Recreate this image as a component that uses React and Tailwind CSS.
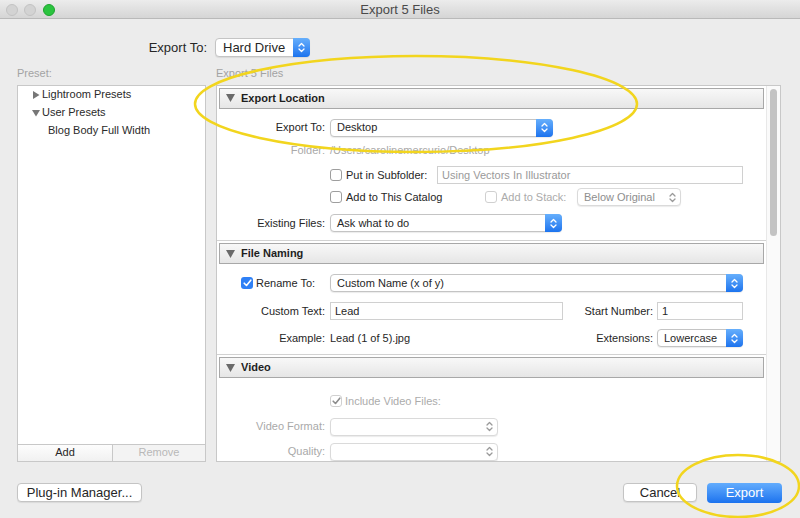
import React from "react";

const Chevrons = ({ color = "#fff" }) => (
  <svg width="7" height="11" viewBox="0 0 7 11" fill="none" stroke={color} strokeWidth="1.3" strokeLinecap="round" strokeLinejoin="round">
    <path d="M1 4L3.5 1.5L6 4" />
    <path d="M1 7L3.5 9.5L6 7" />
  </svg>
);

const Tick = ({ color }) => (
  <svg width="9" height="8" viewBox="0 0 9 8" fill="none" stroke={color} strokeWidth="1.6" strokeLinecap="round" strokeLinejoin="round">
    <path d="M1.2 4.2L3.5 6.5L7.8 1.2" />
  </svg>
);

function Popup({ className = "", text, muted, big }) {
  return (
    <div
      className={`flex items-stretch rounded-[4px] border bg-white shadow-[0_1px_1px_rgba(0,0,0,0.08)] ${
        big ? "h-[19px] text-[13px]" : "h-[18px]"
      } ${muted ? "border-[#dadada]" : "border-[#c4c4c4]"} ${className}`}
    >
      <span className={`flex flex-1 items-center truncate ${big ? "pl-[7px]" : "pl-[6px]"} ${muted ? "text-[#8e8e8e]" : ""}`}>
        {text}
      </span>
      {muted ? (
        <span className="flex w-[16px] items-center justify-center">
          <Chevrons color="#9a9a9a" />
        </span>
      ) : (
        <span className="-my-px -mr-px flex w-[17px] items-center justify-center rounded-r-[4px] bg-gradient-to-b from-[#66affc] to-[#1b73ee]">
          <Chevrons />
        </span>
      )}
    </div>
  );
}

function Field({ className = "", text, muted }) {
  return (
    <div className={`flex h-[18px] items-center border border-[#d0d0d0] bg-white pl-[4px] ${muted ? "text-[#9a9a9a]" : ""} ${className}`}>
      {text}
    </div>
  );
}

function Check({ on, dim }) {
  if (on && !dim) {
    return (
      <span className="flex h-[12px] w-[12px] shrink-0 items-center justify-center rounded-[3px] bg-[#2e80f6]">
        <Tick color="#fff" />
      </span>
    );
  }
  return (
    <span
      className={`flex h-[12px] w-[12px] shrink-0 items-center justify-center rounded-[3px] border bg-white ${
        dim ? "border-[#d0d0d0]" : "border-[#9e9e9e]"
      }`}
    >
      {on && <Tick color="#8c8c8c" />}
    </span>
  );
}

const Label = ({ children, dim }) => (
  <span className={`w-[113px] shrink-0 pr-[5px] text-right ${dim ? "text-[#a9a9a9]" : ""}`}>{children}</span>
);

function Header({ title }) {
  return (
    <div className="mx-[2px] mt-[2px] flex h-[21px] shrink-0 items-center border border-[#a8a8a8] bg-gradient-to-b from-[#f8f8f8] to-[#e6e6e6] pl-[6px]">
      <svg width="9" height="8" viewBox="0 0 9 8">
        <path d="M0 0H9L4.5 8Z" fill="#6a6a6a" />
      </svg>
      <span className="ml-[6px] font-bold text-[#1e1e1e]">{title}</span>
    </div>
  );
}

const Rule = ({ className = "" }) => <div className={`h-px shrink-0 bg-[#d2d2d2] ${className}`} />;

const Tri = ({ open }) => (
  <svg width="8" height="8" viewBox="0 0 8 8" className="shrink-0">
    {open ? <path d="M0 1H8L4 7.5Z" fill="#777" /> : <path d="M1 0V8L7.5 4Z" fill="#777" />}
  </svg>
);

export default function App() {
  return (
    <div className="relative h-[518px] w-[800px] overflow-hidden bg-[#ececec] font-['Liberation_Sans',Arial,sans-serif] text-[11px] text-[#262626]">
      {/* Title bar */}
      <div className="grid h-[19px] grid-cols-[1fr_auto_1fr] items-center border-b border-[#b9b9b9] bg-gradient-to-b from-[#ececec] to-[#d5d5d5]">
        <div className="flex items-center gap-[6px] pl-[6px]">
          <span className="h-[12px] w-[12px] rounded-full border border-[#c3c3c3] bg-[#d3d3d3]" />
          <span className="h-[12px] w-[12px] rounded-full border border-[#c3c3c3] bg-[#d3d3d3]" />
          <span className="ml-px h-[12px] w-[12px] rounded-full border border-[#1ea32f] bg-[#2bc43f]" />
        </div>
        <span className="text-[13px] text-[#4a4a4a]">Export 5 Files</span>
        <span />
      </div>

      {/* Export To */}
      <div className="mt-[19px] flex items-center text-[13px]">
        <span className="w-[208px] pr-[1px] text-right">Export To:</span>
        <Popup big className="ml-[7px] w-[95px]" text="Hard Drive" />
      </div>

      {/* Main */}
      <div className="mt-[10px] flex gap-[10px] pl-[17px]">
        {/* Presets */}
        <div className="flex w-[189px] flex-col">
          <span className="mb-[5px] flex h-[12px] items-center text-[#a3a3a3]">Preset:</span>
          <div className="flex h-[377px] flex-col border border-[#c8c8c8] bg-white">
            <div className="flex-1 text-[#2a2a2a]">
              <div className="flex h-[18px] items-center pl-[14px]">
                <Tri />
                <span className="ml-[2px]">Lightroom Presets</span>
              </div>
              <div className="flex h-[18px] items-center pl-[14px]">
                <Tri open />
                <span className="ml-[2px]">User Presets</span>
              </div>
              <div className="flex h-[18px] items-center pl-[30px]">Blog Body Full Width</div>
            </div>
            <div className="flex h-[17px] border-t border-[#c8c8c8]">
              <span className="flex w-[95px] items-center justify-center border-r border-[#c8c8c8] bg-gradient-to-b from-[#fdfdfd] to-[#f1f1f1]">
                Add
              </span>
              <span className="flex flex-1 items-center justify-center bg-[#f3f3f3] text-[#b8b8b8]">Remove</span>
            </div>
          </div>
        </div>

        {/* Settings */}
        <div className="flex w-[565px] flex-col">
          <span className="mb-[5px] flex h-[12px] items-center text-[#a3a3a3]">Export 5 Files</span>
          <div className="flex h-[377px] border border-[#c8c8c8] bg-white">
            <div className="flex flex-1 flex-col overflow-hidden">
              <Header title="Export Location" />
              <div className="mt-[10px] flex h-[18px] items-center">
                <Label>Export To:</Label>
                <Popup className="w-[223px]" text="Desktop" />
              </div>
              <div className="mt-[5px] flex h-[18px] items-center">
                <Label dim>Folder:</Label>
                <span className="text-[#a9a9a9]">/Users/carolinemercurio/Desktop</span>
              </div>
              <div className="mt-[8px] flex h-[18px] items-center pl-[113px]">
                <Check />
                <span className="ml-[4px] w-[91px]">Put in Subfolder:</span>
                <Field muted className="w-[306px]" text="Using Vectors In Illustrator" />
              </div>
              <div className="mt-[4px] flex h-[18px] items-center pl-[113px]">
                <Check />
                <span className="ml-[4px] w-[139px]">Add to This Catalog</span>
                <Check dim />
                <span className="ml-[4px] w-[76px] text-[#ababab]">Add to Stack:</span>
                <Popup muted className="w-[104px]" text="Below Original" />
              </div>
              <div className="mt-[8px] flex h-[18px] items-center">
                <Label>Existing Files:</Label>
                <Popup className="w-[232px]" text="Ask what to do" />
              </div>
              <Rule className="mt-[8px]" />

              <Header title="File Naming" />
              <div className="mt-[10px] flex h-[18px] items-center pl-[24px]">
                <Check on />
                <span className="ml-[3px] w-[74px]">Rename To:</span>
                <Popup className="w-[413px]" text="Custom Name (x of y)" />
              </div>
              <div className="mt-[10px] flex h-[18px] items-center">
                <Label>Custom Text:</Label>
                <Field className="w-[233px]" text="Lead" />
                <span className="w-[90px] text-right">Start Number:</span>
                <Field className="ml-[4px] w-[86px]" text="1" />
              </div>
              <div className="mt-[9px] flex h-[18px] items-center">
                <Label>Example:</Label>
                <span className="w-[233px]">Lead (1 of 5).jpg</span>
                <span className="w-[90px] text-right">Extensions:</span>
                <Popup className="ml-[4px] w-[86px]" text="Lowercase" />
              </div>
              <Rule className="mt-[7px]" />

              <Header title="Video" />
              <div className="mt-[15px] flex h-[18px] items-center pl-[113px]">
                <Check on dim />
                <span className="ml-[3px] text-[#ababab]">Include Video Files:</span>
              </div>
              <div className="mt-[8px] flex h-[18px] items-center">
                <Label dim>Video Format:</Label>
                <Popup muted className="w-[168px]" text="" />
              </div>
              <div className="mt-[7px] flex h-[18px] items-center">
                <Label dim>Quality:</Label>
                <Popup muted className="w-[168px]" text="" />
              </div>
            </div>
            {/* Scrollbar */}
            <div className="w-[14px] shrink-0 border-l border-[#e8e8e8] bg-[#fafafa] pt-[3px]">
              <div className="mx-auto h-[147px] w-[7px] rounded-full bg-[#c3c3c3]" />
            </div>
          </div>
        </div>
      </div>

      {/* Bottom buttons */}
      <div className="mt-[21px] flex items-center pl-[17px] pr-[18px] text-[13px]">
        <span className="flex h-[19px] w-[125px] items-center justify-center rounded-[4px] border border-[#c4c4c4] bg-white shadow-[0_1px_1px_rgba(0,0,0,0.08)]">
          Plug-in Manager...
        </span>
        <span className="ml-auto flex h-[19px] w-[74px] items-center justify-center rounded-[4px] border border-[#c4c4c4] bg-white shadow-[0_1px_1px_rgba(0,0,0,0.08)]">
          Cancel
        </span>
        <span className="ml-[10px] flex h-[20px] w-[75px] items-center justify-center rounded-[4px] bg-gradient-to-b from-[#62acfd] to-[#1a72ee] text-white">
          Export
        </span>
      </div>

      {/* Yellow annotation marks */}
      <svg className="pointer-events-none absolute inset-0" width="800" height="518" viewBox="0 0 800 518">
        <ellipse cx="416" cy="104" rx="221" ry="48" fill="none" stroke="#f2d51e" strokeWidth="2.5" />
        <ellipse cx="738" cy="486" rx="61" ry="31" fill="none" stroke="#f2d51e" strokeWidth="2.5" />
      </svg>
    </div>
  );
}
